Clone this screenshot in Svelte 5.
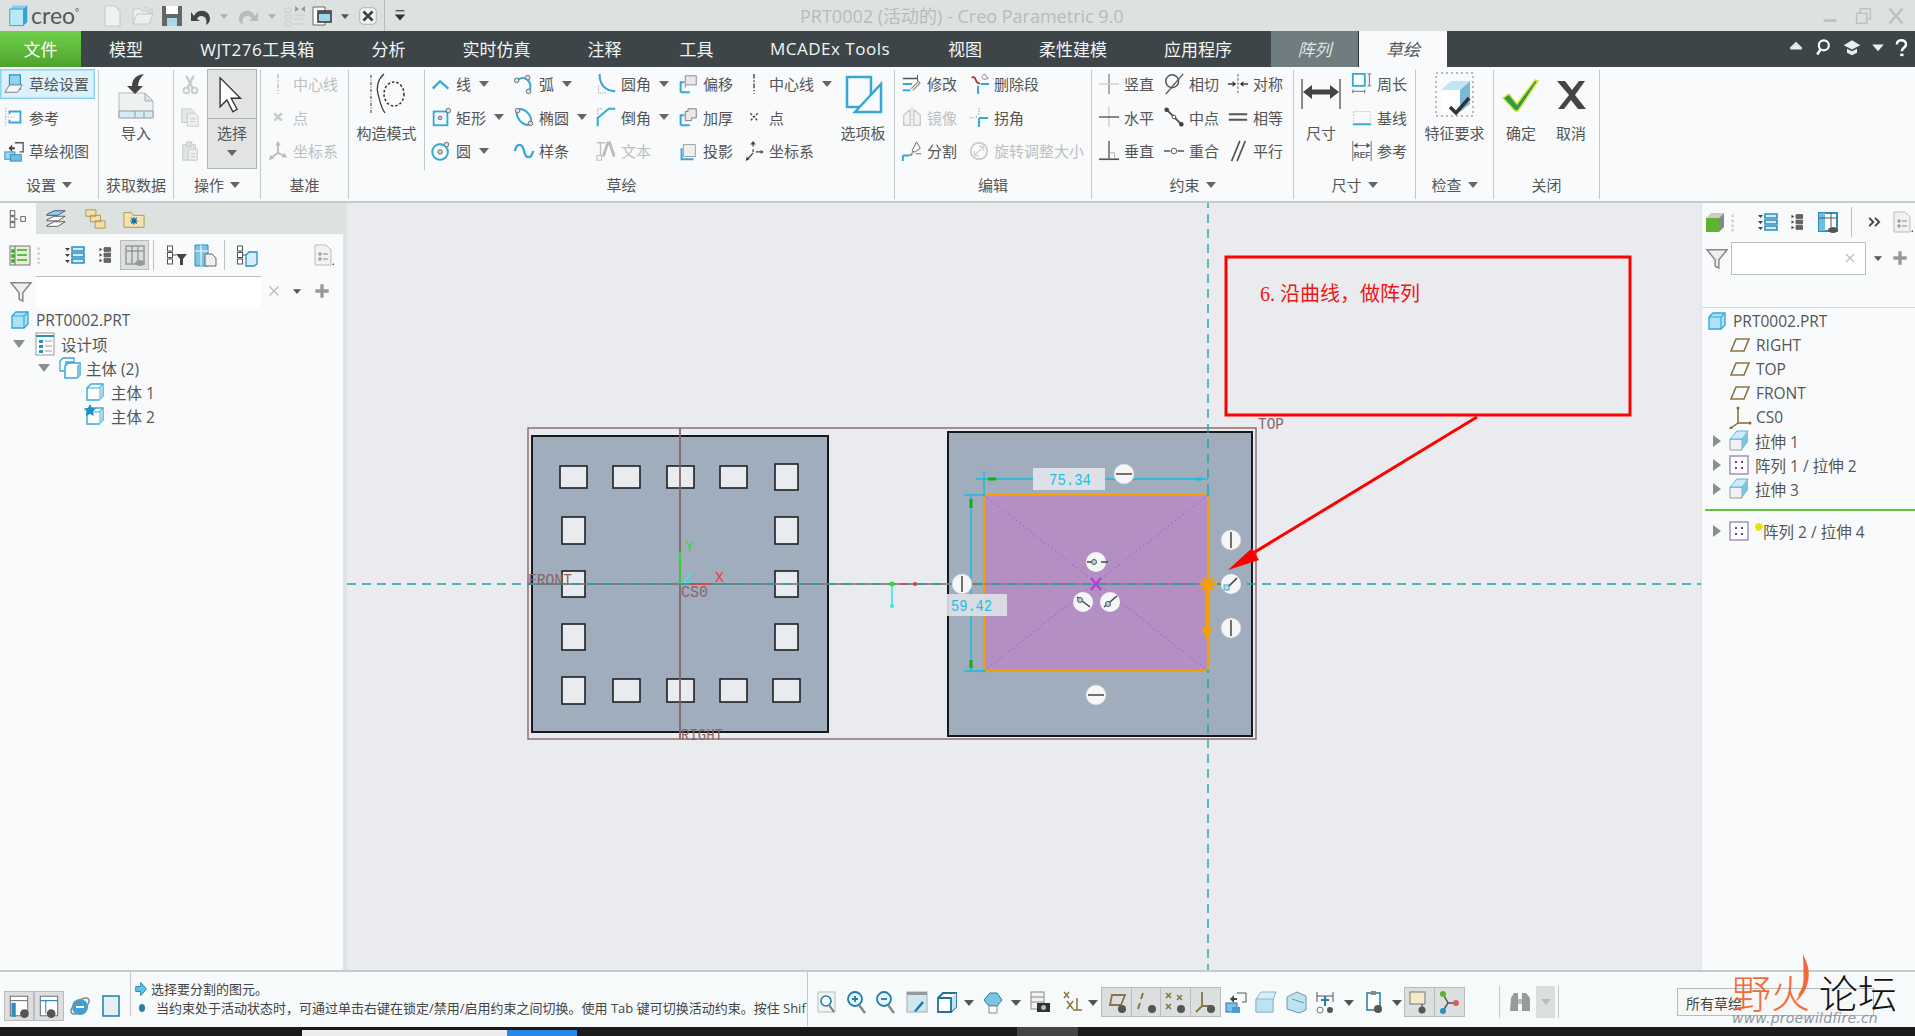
<script>
const B = '#35a8d8', G = '#555', L = '#c6caca', T = '#8a7440';
const box = `<path d="M4 8l4-4h12v12l-4 4H4z" fill="#aee3f7" stroke="${B}" stroke-width="1.4"/><path d="M4 8h12v12M16 8l4-4" fill="none" stroke="${B}" stroke-width="1.2"/>`;
const wbox = `<path d="M4 8l4-4h12v12l-4 4H4z" fill="#fff" stroke="${B}" stroke-width="1.4"/><path d="M16 8v12l4-4V4z" fill="#9fd8ee"/><path d="M4 8h12l4-4" fill="none" stroke="${B}" stroke-width="1"/>`;
const plane = `<path d="M3 18l5-12h13l-5 12z" fill="none" stroke="${T}" stroke-width="1.6"/>`;
const extr = `<path d="M3 10h12v11H3z" fill="#f2f2f2" stroke="#999"/><path d="M3 10l7-8h11l-6 8z" fill="#cfeaf6" stroke="${B}" stroke-width=".8"/><path d="M15 10l6-8v11l-6 8z" fill="#7cc4e2"/>`;
const patt = `<rect x="3" y="3" width="18" height="18" fill="#fff" stroke="#9a8ab8" stroke-width="1.4"/><path d="M8 8h2v2H8zM14 8h2v2h-2zM8 14h2v2H8zM14 14h2v2h-2z" fill="#6a3fa0"/>`;
const chain = (c) => `<path d="M6 7v10M6 12h6" stroke="#555" fill="none"/><rect x="3.5" y="3" width="5" height="5" fill="${c}" stroke="#555"/><rect x="3.5" y="9.5" width="5" height="5" fill="${c}" stroke="#555"/><rect x="3.5" y="16" width="5" height="5" fill="${c}" stroke="#555"/>`;
const listb = `<path d="M9 4h12v4H9zM9 10h12v4H9zM9 16h12v4H9z" fill="#cfeaf6" stroke="#2a8fbf" stroke-width="1.6"/><path d="M2 5h5l-2.500 3zM2 11h5l-2.500 3zM2 17h5l-2.500 3z" fill="#444"/>`;
const listg = `<path d="M11 4h7v4h-7zM11 10h7v4h-7zM11 16h7v4h-7z" fill="#666" stroke="#555"/><path d="M6 4l3 2-3 2zM6 10l3 2-3 2zM6 16l3 2-3 2z" fill="#444"/>`;
const sheet = `<path d="M4 2h11l5 5v15H4z" fill="#f0f2f2" stroke="#bbb"/><path d="M8 10h2v2H8zM8 15h2v2H8zM12 11h5M12 16h5" stroke="#888" fill="none"/><path d="M21 22h2v-2z" fill="#555"/>`;
const down = `<path d="M5 9h14l-7 8z" fill="#555"/>`;

const icons = {
 setup:`<path d="M7 2h12v16H7z" fill="#8fd4ef" stroke="#2a8fbf" stroke-width="1.2"/><path d="M2 21l5-8h14l-5 8z" fill="#f6f6f6" stroke="#777"/>`,
 ref:`<path d="M7 9V6h12v12H7v-3" fill="none" stroke="${B}" stroke-width="2"/><path d="M3 2v20M2 12h10" stroke="#aaa" stroke-dasharray="1.500 1.500" fill="none"/>`,
 view:`<path d="M13 3h9v10h-4" fill="none" stroke="#555" stroke-width="1.400"/><path d="M6 9l4-4v3h3v2h-3v3z" fill="#444"/><rect x="2" y="13" width="11" height="8" fill="#9fd8ee" stroke="#2a8fbf"/><rect x="8" y="16" width="12" height="7" fill="#6bbfe0" stroke="#2a8fbf"/>`,
 cut:`<circle cx="17" cy="19" r="3" fill="none" stroke="${L}" stroke-width="2"/><circle cx="8" cy="19" r="3" fill="none" stroke="${L}" stroke-width="2"/><path d="M8 3l7 14M16 3L9 17" stroke="${L}" stroke-width="2.500"/>`,
 copy:`<path d="M3 3h10l3 3v12H3z" fill="#e6e8e8" stroke="${L}"/><path d="M9 8h9l3 3v11H9z" fill="#eee" stroke="${L}"/><path d="M12 14h6M12 17h6" stroke="${L}"/>`,
 paste:`<path d="M4 5h14v17H4z" fill="#e2e4e4" stroke="${L}"/><path d="M8 2h6v5H8z" fill="#ddd" stroke="${L}"/><path d="M10 10h10v12H10z" fill="#eee" stroke="${L}"/><path d="M13 15h5M13 18h5" stroke="${L}"/>`,
 cline:`<path d="M12 1v22" stroke="#bbb" stroke-width="1.500" stroke-dasharray="5 2 1.500 2" fill="none"/>`,
 cline2:`<path d="M12 1v22" stroke="#444" stroke-width="1.500" stroke-dasharray="5 2 1.500 2" fill="none"/>`,
 xpt:`<path d="M8 8l8 8M16 8l-8 8" stroke="${L}" stroke-width="2.500"/>`,
 xpt2:`<path d="M8 8l8 8M16 8l-8 8" stroke="#444" stroke-width="1.500" stroke-dasharray="2.500 1.500"/>`,
 csys:`<path d="M12 3v11M12 14l8 4M12 14l-8 6" stroke="#bbb" stroke-width="2" fill="none"/><path d="M12 1l-3 5h6zM22 19l-6 0 3-5zM2 22l2-6 4 4z" fill="#bbb"/>`,
 csys2:`<path d="M11 4v3M11 10v3M11 14l-6 7M14 13h5" stroke="#444" stroke-width="1.400" fill="none"/><path d="M11 1l-3 4h6zM23 13l-4-2v4zM3 23l1-5 3 3z" fill="#444"/>`,
 line:`<path d="M3 17l8-8 9 8" fill="none" stroke="${B}" stroke-width="2.500"/>`,
 arc:`<path d="M4 8c8-6 18 0 14 12" fill="none" stroke="${B}" stroke-width="2.200"/><circle cx="4" cy="8" r="2.500" fill="#ddd" stroke="#666"/><circle cx="16" cy="5" r="2.500" fill="#ddd" stroke="#666"/><circle cx="17" cy="20" r="2.500" fill="#ddd" stroke="#666"/>`,
 fillet:`<path d="M5 1c0 12 6 18 17 19" fill="none" stroke="${B}" stroke-width="2.200"/><path d="M4 14v8h8" fill="none" stroke="#999" stroke-dasharray="1.500 1.500"/>`,
 offset:`<path d="M4 21V10h4M4 21h10" fill="none" stroke="${B}" stroke-width="2.200"/><path d="M9 16V3h12v10H9" fill="#e8e8e8" stroke="#888"/>`,
 rect:`<rect x="4" y="6" width="15" height="15" fill="none" stroke="${B}" stroke-width="2"/><circle cx="11" cy="13" r="2" fill="#ccc" stroke="#666"/><circle cx="20" cy="5" r="2.500" fill="#ddd" stroke="#666"/>`,
 ell:`<ellipse cx="12" cy="12" rx="6" ry="10" transform="rotate(-40 12 12)" fill="none" stroke="${B}" stroke-width="2.200"/><circle cx="5" cy="5" r="2.500" fill="#ddd" stroke="#666"/><circle cx="19" cy="19" r="2.500" fill="#ddd" stroke="#666"/>`,
 chamf:`<path d="M3 22v-9L15 3h7" fill="none" stroke="${B}" stroke-width="2.200"/><path d="M3 9V3h6" fill="none" stroke="#888" stroke-dasharray="1.500 1.500"/>`,
 thick:`<path d="M4 21V10h4M4 21h10" fill="none" stroke="${B}" stroke-width="2.200"/><path d="M9 16V6h3V3h9v10h-5v3z" fill="#e8e8e8" stroke="#777"/>`,
 circ:`<circle cx="11" cy="13" r="8.500" fill="none" stroke="${B}" stroke-width="2.200"/><circle cx="11" cy="13" r="2.500" fill="#ccc" stroke="#666"/><circle cx="18" cy="5" r="2.500" fill="#ddd" stroke="#666"/>`,
 spline:`<path d="M2 12c2-9 8-9 10 0s8 9 10 0" fill="none" stroke="${B}" stroke-width="2.500"/>`,
 txt:`<path d="M2 3h9M6 3v14" stroke="#c0c0c0" stroke-width="1.400"/><path d="M9 18l5-15h2l5 15" fill="none" stroke="#bbb" stroke-width="3"/><rect x="2" y="17" width="5" height="5" fill="none" stroke="#bbb"/>`,
 proj:`<path d="M5 9v12h13" fill="none" stroke="${B}" stroke-width="2.200"/><path d="M7 18V5h13v13z" fill="#f0f0f0" stroke="#999"/>`,
 modify:`<path d="M2 6h16M2 12h9M2 19h8" stroke="#555" stroke-width="1.500"/><path d="M2 12h10M2 19h8" stroke="${B}" stroke-width="2"/><path d="M18 2v7M13 19l8-8-2-2-8 8" fill="#f0e2c0" stroke="#555"/>`,
 delseg:`<path d="M4 5c6-3 3 8 9 6" fill="none" stroke="#a33" stroke-width="2"/><path d="M14 12h9M11 14v9" stroke="${B}" stroke-width="2.200"/><path d="M15 4l3-3 4 5-5 1z" fill="#fff" stroke="#777"/>`,
 mirror:`<path d="M12 1v22" stroke="#ccc" stroke-dasharray="2 2"/><path d="M10 4L3 10v11h7zM14 4l7 6v11h-7z" fill="#f2f2f2" stroke="${L}" stroke-width="1.500"/>`,
 corner:`<path d="M9 11v3M2 13h4" stroke="#888" stroke-dasharray="1.500 1.500"/><path d="M12 2v9" stroke="#888" stroke-dasharray="1.500 1.500"/><path d="M12 13h10M12 13v10" stroke="${B}" stroke-width="2.200" fill="none"/>`,
 split:`<path d="M2 17h7M2 17v6" stroke="${B}" stroke-width="2.200" fill="none"/><path d="M9 17l5-4M12 12l5-10 4 7-6 4zM16 15h6" stroke="#666" fill="#fff"/><circle cx="11" cy="16" r="1.500" fill="#999"/>`,
 rot:`<circle cx="12" cy="12" r="9" fill="none" stroke="#ccc" stroke-width="2"/><path d="M7 17L17 7M17 7h-5M17 7v5M7 17h5M7 17v-5" fill="none" stroke="#ccc" stroke-width="1.400"/>`,
 vert:`<path d="M12 1v22" stroke="#888" stroke-width="1.500"/><path d="M1 12h22" stroke="#ccc" stroke-width="1.500"/>`,
 horz:`<path d="M12 1v22" stroke="#ccc" stroke-width="1.500"/><path d="M1 12h22" stroke="#555" stroke-width="1.500"/>`,
 perp:`<path d="M12 1v19" stroke="#555" stroke-width="1.500"/><path d="M1 21h22" stroke="#555" stroke-width="1.800"/><path d="M12 14h6v6" fill="none" stroke="#aaa"/>`,
 tan:`<circle cx="10" cy="9" r="7" fill="none" stroke="#555" stroke-width="1.600"/><path d="M22 1L3 23" stroke="#555" stroke-width="1.500"/>`,
 mid:`<path d="M3 3l18 18" stroke="#555" stroke-width="2"/><circle cx="4" cy="4" r="2.500" fill="#444"/><circle cx="20" cy="20" r="2.500" fill="#444"/><circle cx="12" cy="12" r="2" fill="#fff" stroke="#444"/>`,
 coin:`<path d="M1 12h7M16 12h7" stroke="#555" stroke-width="1.400"/><circle cx="12" cy="12" r="3" fill="#fff" stroke="#555"/>`,
 sym:`<path d="M12 1v22" stroke="#888" stroke-dasharray="3 1.500" stroke-width="1.400"/><path d="M1 12h5M18 12h5" stroke="#444" stroke-width="1.400"/><path d="M10 12l-4-3v6zM14 12l4-3v6z" fill="#333"/>`,
 eq:`<path d="M2 9h20M2 15h20" stroke="#555" stroke-width="2.200"/>`,
 par:`<path d="M5 23L14 1M11 23L20 1" stroke="#555" stroke-width="1.800"/>`,
 peri:`<rect x="2" y="1" width="13" height="13" fill="#fff" stroke="${B}" stroke-width="2"/><path d="M20 1v13M18 1h4M18 14h4M2 20h13M2 18v4M15 18v4" stroke="#666"/>`,
 base:`<rect x="3" y="6" width="18" height="13" fill="none" stroke="#bbb" stroke-dasharray="1.500 1.500"/><path d="M2 20h20" stroke="${B}" stroke-width="2"/>`,
 refd:`<path d="M2 1v22M22 1v22M3 6h18" stroke="#666"/><path d="M3 6l4-3v6zM21 6l-4-3v6z" fill="#555"/><text x="12" y="20" font-size="9" text-anchor="middle" fill="#666" font-family="Liberation Sans" font-weight="700">REF</text>`,
 import:`<path d="M4 22h26l8 8v16H4z" fill="#eef1f1" stroke="#bbb"/><path d="M30 22l8 8h-8z" fill="#cfe7f1" stroke="#aaa"/><path d="M4 40h34v7H4zM20 40v7M29 40v7" fill="#d4ebf4" stroke="#999"/><path d="M29 3c-8 1-12 5-12 12h-5l8 8 8-8h-5c0-4 2-8 6-12z" fill="#444"/>`,
 cursor:`<path d="M6 4v34l8-8 7 14 5-3-7-13h11z" fill="#fff" stroke="#333" stroke-width="1.600"/>`,
 construct:`<path d="M4 2v38" stroke="#333" stroke-dasharray="3 1.500 1 1.500" fill="none"/><path d="M17 1c-6 5-8 13-6 20s3 14 7 19" fill="none" stroke="#333" stroke-width="1.200"/><ellipse cx="27" cy="21" rx="10" ry="12" fill="none" stroke="#333" stroke-dasharray="2.500 2" stroke-width="1.500"/>`,
 palette:`<path d="M4 3h24v30H4z" fill="none" stroke="${B}" stroke-width="2.500"/><path d="M12 38l26-28v28z" fill="#fafcfd" stroke="${B}" stroke-width="2.500"/>`,
 dim:`<path d="M2 2v30M40 2v30" stroke="#444" stroke-width="1.200"/><path d="M10 15h22" stroke="#444" stroke-width="5"/><path d="M3 15l9-7v14zM39 15l-9-7v14z" fill="#444"/>`,
 feat:`<rect x="1" y="1" width="37" height="43" fill="none" stroke="#bbb" stroke-width="2" stroke-dasharray="2 3"/><path d="M6 18l10-9h19v23l-10 8H6z" fill="#fff"/><path d="M6 18l10-9h19l-10 9z" fill="#bfe6f5"/><path d="M25 18l10-9v23l-10 8z" fill="#7ab9d6"/><path d="M15 35l6 6 13-15" fill="none" stroke="#333" stroke-width="3.500"/>`,
 ok:`<path d="M1 22l6-4 8 10L33 4l3 1-20 30h-3z" fill="#2e9a4c" stroke="#dbe33a" stroke-width="1.500"/>`,
 cancel:`<path d="M3 3h8l7 9 7-9h6L21 17l11 14h-8l-7-9-7 9H4l11-14z" fill="#454545"/>`,
 logo:`<path d="M3 5l4-4h15v18l-4 4H3z" fill="#7fd0f0"/><path d="M3 5h15v18H3z" fill="#b9e8fa" stroke="#3aa0cc"/><path d="M18 5l4-4v18l-4 4z" fill="#3aa0cc"/>`,
 new:`<path d="M5 2h10l5 5v15H5z" fill="#f0f2f2" stroke="#c8cccc" stroke-width="1.200"/>`,
 open:`<path d="M3 20V5h7l2 2h7v3" fill="#eee" stroke="#c4c8c8"/><path d="M3 20l4-10h16l-4 10z" fill="#eee" stroke="#c4c8c8"/><path d="M14 4c3-1 5 0 6 2l2-2v5h-5" fill="none" stroke="#ccc"/>`,
 save:`<path d="M2 2h20v20H2z" fill="#666"/><path d="M6 2h12v8H6z" fill="#fff"/><path d="M7 14h10v8H7z" fill="#a6d8ec"/>`,
 undo:`<path d="M5 12c3-8 16-7 16 3 0 3-2 5-4 6 1-3 1-9-5-9-2 0-3 1-4 3l3 2H2V8z" fill="#444"/>`,
 redo:`<path d="M19 12C16 4 3 5 3 15c0 3 2 5 4 6-1-3-1-9 5-9 2 0 3 1 4 3l-3 2h9V8z" fill="#bbb"/>`,
 regen:`<path d="M2 4h6v4H2zM2 11h6v4H2zM2 18h6v4H2z" fill="none" stroke="#ccc"/><path d="M10 11h12M10 15h12M10 20h12" stroke="#ccc"/><path d="M12 2l4 3-4 3zM22 2l-4 3 4 3z" fill="#999"/>`,
 win:`<path d="M3 3h12v18H3z" fill="#fff" stroke="#666"/><path d="M8 7h13v11H8z" fill="#9fd8ee" stroke="#333" stroke-width="1.500"/><path d="M8 7h13v3H8z" fill="#555"/>`,
 closew:`<rect x="3" y="3" width="18" height="18" rx="4" fill="#f4f4f4" stroke="#aaa"/><path d="M7 7l10 10M17 7L7 17" stroke="#444" stroke-width="3"/>`,
 more:`<path d="M6 5h12" stroke="#333" stroke-width="1.500"/><path d="M5 10h14l-7 8z" fill="#333"/>`,
 min:`<path d="M5 17h14" stroke="#bcc2c2" stroke-width="3"/>`,
 rest:`<path d="M5 9h11v11H5zM9 9V4h11v11h-4" fill="none" stroke="#bcc2c2" stroke-width="1.600"/>`,
 x:`<path d="M5 4l14 16M19 4L5 20" stroke="#bcc2c2" stroke-width="3"/>`,
 up:`<path d="M5 15l7-7 7 7z" fill="#e8eded"/><path d="M5 14l7-7 7 7" stroke="#e8eded" stroke-width="2" fill="none"/>`,
 find:`<circle cx="13" cy="10" r="6" fill="none" stroke="#fff" stroke-width="2.500"/><path d="M9 15l-4 6" stroke="#fff" stroke-width="3"/>`,
 hat:`<path d="M12 4l10 6-10 5L2 10z" fill="#e8eded"/><path d="M6 14v5l6 3 6-3v-5l-6 3z" fill="#e8eded"/>`,
 dn:`<path d="M5 9h14l-7 8z" fill="#e8eded"/>`,
 ph:`<path d="M7 9c0-7 11-7 11 0 0 4-5 4-5 8" fill="none" stroke="#fff" stroke-width="3"/><path d="M11 20h4v3h-4z" fill="#fff"/>`,
 tree:chain('#fff')+`<rect x="15" y="9.500" width="5" height="5" fill="#fff" stroke="#555"/>`,
 layer:`<path d="M2 7l8-4h12l-8 5H2z" fill="#8fd4ef" stroke="#447"/><path d="M2 13l8-4h12l-8 5H2zM2 19l8-4h12l-8 5H2z" fill="#fff" stroke="#555"/>`,
 folders:`<path d="M2 2h11v7H2zM7 8h11v7H7zM12 14h11v8H12z" fill="#f4dfa7" stroke="#a89454"/>`,
 work:`<path d="M1 5h8l2 3h12v13H1z" fill="#f4e3ae" stroke="#a89454"/><path d="M12 10v8M8 14h8M9 11l6 6M15 11l-6 6" stroke="#1c6f9e" stroke-width="1.500"/>`,
 tgreen:`<rect x="2" y="3" width="20" height="19" fill="#e4f1d8" stroke="#777"/><path d="M7 3v19" stroke="#777"/><path d="M4 7h2v2H4zM4 12h2v2H4zM4 17h2v2H4zM9 7h10M9 12h10M9 17h10" stroke="#3da82a" fill="#3da82a" stroke-width="1.400"/>`,
 dots:`<path d="M10 3h3v3h-3zM10 9h3v3h-3zM10 15h3v3h-3zM10 20h3v3h-3z" fill="#d0d3d3"/>`,
 listb, listg, sheet,
 cols:`<path d="M3 3h18v18H3zM9 3v18M15 3v18M3 8h18" fill="none" stroke="#999" stroke-width="1.500"/><ellipse cx="17" cy="20" rx="5" ry="3" fill="#999"/>`,
 colsb:`<path d="M3 3h18v18H3z" fill="#fff" stroke="#2a8fbf" stroke-width="2"/><path d="M3 3h6v18H3z" fill="#6bbfe0"/><path d="M15 3v14M3 8h18" stroke="#555"/><ellipse cx="17" cy="20" rx="5" ry="3" fill="#555"/>`,
 tfilter:chain('#fff')+`<path d="M12 11h11l-4 5v6h-3v-6z" fill="#444"/>`,
 tsheet:`<path d="M2 2h13v21H2z" fill="#7cc4e2" stroke="#2a8fbf"/><path d="M8 2v21M2 8h13" stroke="#fff"/><path d="M12 11h7l4 4v8H12z" fill="#eee" stroke="#666"/>`,
 tbody:chain('#fff')+`<path d="M12 12l3-3h8v12l-3 2h-8z" fill="#d4eefa" stroke="#2a8fbf" stroke-width="1.300"/>`,
 filter:`<path d="M1 3h22l-9 11v9l-4-2v-7z" fill="#eee" stroke="#888" stroke-width="1.600"/>`,
 xg:`<path d="M6 6l12 12M18 6L6 18" stroke="#bbb" stroke-width="1.800"/>`,
 down,
 plus:`<path d="M12 4v16M4 12h16" stroke="#999" stroke-width="4"/>`,
 box, wbox, plane, extr, patt,
 boxes:`<path d="M2 5l3-3h11v4H8v9H2z" fill="#fff" stroke="${B}" stroke-width="1.300"/><path d="M7 10l3-3h12v12l-3 3H7z" fill="#fff" stroke="${B}" stroke-width="1.500"/><path d="M19 10v12l3-3V7z" fill="#7cc4e2"/>`,
 items:`<rect x="3" y="1" width="18" height="22" fill="#fff" stroke="#999"/><path d="M3 4h18" stroke="#2a8fbf" stroke-width="2"/><path d="M6 8h4v3H6zM6 13h4v3H6zM6 18h4v3H6z" fill="#2a8fbf"/><path d="M12 9h7M12 14h7M12 19h7" stroke="#999"/>`,
 sbox:wbox+`<path d="M7 0l2 4 4 .5-3 3 .8 4.500L7 10l-4 2 .8-4.500-3-3L5 4z" fill="#1f8fc4"/>`,
 cube3:`<path d="M3 8h13v14H3z" fill="#5cb531"/><path d="M3 8l5-5h13l-5 5z" fill="#ccc"/><path d="M16 8l5-5v14l-5 5z" fill="#888"/>`,
 csysb:`<path d="M10 3v15M10 18h12M10 18l-7 5" stroke="#8a6a30" stroke-width="1.500" fill="none"/><circle cx="10" cy="3" r="1.500" fill="#8a6a30"/><circle cx="22" cy="18" r="1.500" fill="#8a6a30"/><circle cx="3" cy="23" r="1.500" fill="#8a6a30"/>`,
 chev:`<path d="M5 7l5 5-5 5M12 7l5 5-5 5" fill="none" stroke="#444" stroke-width="2.200"/>`,
 star:`<path d="M4 0v8M0 4h8M1 1l6 6M7 1L1 7" stroke="#e4e400" stroke-width="1.800"/>`,
 sb1:`<rect x="4" y="3" width="16" height="18" fill="#fff" stroke="#777"/><path d="M4 7h16" stroke="#777"/><rect x="5" y="9" width="4" height="13" fill="#2a8fbf"/><circle cx="17" cy="19" r="4" fill="#555"/>`,
 sb2:`<rect x="4" y="3" width="16" height="18" fill="#fff" stroke="#777"/><path d="M4 7h16M9 7v12" stroke="#2a8fbf"/><circle cx="14" cy="19" r="4" fill="#555"/>`,
 ie:`<circle cx="12" cy="13" r="8" fill="#3aa0dc"/><ellipse cx="12" cy="12" rx="11" ry="5" transform="rotate(-40 12 12)" fill="none" stroke="#7f8c94" stroke-width="1.500"/><path d="M8 13h8" stroke="#fff" stroke-width="2"/>`,
 winb:`<rect x="4" y="2" width="16" height="20" fill="#e4f0f5" stroke="#1f7da6" stroke-width="1.500"/>`,
 arrowb:`<path d="M2 7h6V2l7 8-7 8v-5H2z" fill="#5cc0e8" stroke="#1f7da6"/>`,
 zm:`<rect x="3" y="2" width="17" height="20" fill="#f2f4f4" stroke="#bbb"/><circle cx="11" cy="11" r="5" fill="#fff" stroke="#1f7da6" stroke-width="1.600"/><path d="M14 15l5 7" stroke="#777" stroke-width="2"/>`,
 zp:`<circle cx="10" cy="9" r="7" fill="#e8f6fc" stroke="#1f7da6" stroke-width="1.800"/><path d="M10 6v6M7 9h6" stroke="#1f7da6" stroke-width="1.800"/><path d="M14 15l6 8" stroke="#888" stroke-width="2.500"/>`,
 zn:`<circle cx="10" cy="9" r="7" fill="#e8f6fc" stroke="#1f7da6" stroke-width="1.800"/><path d="M7 9h6" stroke="#1f7da6" stroke-width="1.800"/><path d="M14 15l6 8" stroke="#888" stroke-width="2.500"/>`,
 repaint:`<rect x="2" y="2" width="20" height="20" fill="#cfe7f1" stroke="#aaa"/><path d="M2 2h20v3H2z" fill="#999"/><path d="M9 21l8-10 2 2-8 9z" fill="#1f7da6"/>`,
 vbox:`<path d="M3 8l5-5h13v14l-5 5H3z" fill="#fff" stroke="#1f6f96" stroke-width="1.800"/><path d="M16 8l5-5v14l-5 5z" fill="#bfe3f2"/><path d="M3 8h13v14" fill="none" stroke="#1f6f96" stroke-width="1.800"/>`,
 disp:`<path d="M3 10l6-7h7l5 7-5 6H8z" fill="#7cc4e2" stroke="#1f7da6"/><path d="M8 16h8v7H8z" fill="#fff" stroke="#888"/>`,
 cam:`<rect x="3" y="2" width="13" height="17" fill="#f2f2f2" stroke="#888"/><path d="M3 7h13M3 12h13" stroke="#888"/><rect x="9" y="13" width="13" height="9" fill="#333"/><circle cx="15.500" cy="17.500" r="2.500" fill="#bbb"/>`,
 dtm:`<path d="M5 2l5 6M10 2L5 8M8 11l6 8M14 11l-6 8M18 8v12M14 20h9" stroke="${T}" stroke-width="1.500"/>`,
 t1:`<path d="M6 15l2-10h13l-4 10z" fill="none" stroke="${T}" stroke-width="1.800"/><circle cx="18" cy="19" r="4" fill="#555"/>`,
 t2:`<path d="M9 3L7 9M6 13l-2 6" stroke="${T}" stroke-width="2"/><circle cx="18" cy="19" r="4" fill="#555"/>`,
 t3:`<path d="M3 3l5 5M8 3L3 8M14 5l5 5M19 5l-5 5M3 14l5 5M8 14l-5 5" stroke="${T}" stroke-width="1.600"/><circle cx="18" cy="19" r="4" fill="#555"/>`,
 t4:`<path d="M9 2v14M9 16h10M9 16l-6 6" stroke="${T}" stroke-width="1.800"/><circle cx="18" cy="19" r="4" fill="#555"/>`,
 shade1:`<path d="M13 3h9v9h-4" fill="none" stroke="#555"/><path d="M6 9l4-4v3h3v2h-3v3z" fill="#444"/><rect x="2" y="13" width="11" height="9" fill="#7cc4e2" stroke="#1f7da6"/><rect x="8" y="17" width="8" height="6" fill="#4aa0cc"/>`,
 shade2:`<path d="M2 9l5-7h15l-3 8v12H2z" fill="#d8eef7" stroke="#8fb8c8"/><path d="M2 9h17v13H2z" fill="#bde2f1" stroke="#8fb8c8"/>`,
 shade3:`<path d="M3 7l10-5 9 4v14l-7 3-12-4z" fill="#bde2f1" stroke="#6a98aa"/><path d="M8 9l12 4" stroke="#6a98aa"/>`,
 sec:`<path d="M4 2v10M20 2v10M4 6h16" stroke="#555"/><path d="M12 6v10M8 10h8" stroke="#1f7da6" stroke-width="2"/><circle cx="7" cy="20" r="3" fill="none" stroke="#777"/><circle cx="17" cy="20" r="3" fill="#555"/>`,
 pg:`<rect x="5" y="3" width="13" height="17" fill="#fff" stroke="#1f7da6" stroke-width="1.500"/><rect x="9" y="1" width="5" height="4" fill="#888"/><circle cx="16" cy="19" r="4" fill="#555"/>`,
 b1:`<rect x="3" y="2" width="15" height="12" fill="#f4e9c8" stroke="#777"/><path d="M15 14v6" stroke="#333"/><circle cx="15" cy="20" r="3.500" fill="#555"/>`,
 b2:`<path d="M6 4l5 9-5 8M11 13h8" stroke="#555" stroke-width="1.500" fill="none"/><circle cx="6" cy="4" r="3" fill="#5cb531"/><circle cx="6" cy="21" r="3" fill="#2a8fbf"/><circle cx="19" cy="13" r="3" fill="#d76060"/>`,
 bino:`<path d="M3 8l3-5h4v18H2zM14 3h4l4 5 0 13h-8z" fill="#999"/><path d="M10 9h4v5h-4z" fill="#bbb"/>`,
 dn2:`<path d="M7 10h10l-5 6z" fill="#555"/>`,
};

const it = (i, t, o = {}) => ({ i, t, ...o });
const groups = [
 { w: 99, label: '设置', arr: 1, parts: [{ k: 'col', w: 98, items: [it('setup','草绘设置',{hl:1}), it('ref','参考'), it('view','草绘视图')] }] },
 { w: 75, label: '获取数据', parts: [{ k: 'lg', w: 74, i: 'import', iw: 42, ih: 48, t: '导入' }] },
 { w: 87, label: '操作', arr: 1, parts: [{ k: 'ico', w: 33, items: ['cut','copy','paste'] }, { k: 'sel' }] },
 { w: 88, label: '基准', parts: [{ k: 'col', w: 84, pl: 3, items: [it('cline','中心线',{dis:1}), it('xpt','点',{dis:1}), it('csys','坐标系',{dis:1})] }] },
 { w: 546, label: '草绘', parts: [
   { k: 'lg', w: 75, i: 'construct', iw: 40, ih: 44, t: '构造模式' }, { k: 'vsep' },
   { k: 'col', w: 83, pl: 2, items: [it('line','线',{a:1}), it('rect','矩形',{a:1}), it('circ','圆',{a:1})] },
   { k: 'col', w: 82, items: [it('arc','弧',{a:1}), it('ell','椭圆',{a:1}), it('spline','样条')] },
   { k: 'col', w: 82, items: [it('fillet','圆角',{a:1}), it('chamf','倒角',{a:1}), it('txt','文本',{dis:1})] },
   { k: 'col', w: 64, items: [it('offset','偏移'), it('thick','加厚'), it('proj','投影')] },
   { k: 'col', w: 95, pl: 2, items: [it('cline2','中心线',{a:1}), it('xpt2','点'), it('csys2','坐标系')] },
   { k: 'lg', w: 56, i: 'palette', iw: 40, ih: 42, t: '选项板' } ] },
 { w: 197, label: '编辑', parts: [
   { k: 'col', w: 67, pl: 3, items: [it('modify','修改'), it('mirror','镜像',{dis:1}), it('split','分割')] },
   { k: 'col', w: 126, items: [it('delseg','删除段'), it('corner','拐角'), it('rot','旋转调整大小',{dis:1})] } ] },
 { w: 202, label: '约束', arr: 1, parts: [
   { k: 'col', w: 65, pl: 3, items: [it('vert','竖直'), it('horz','水平'), it('perp','垂直')] },
   { k: 'col', w: 64, items: [it('tan','相切'), it('mid','中点'), it('coin','重合')] },
   { k: 'col', w: 70, items: [it('sym','对称'), it('eq','相等'), it('par','平行')] } ] },
 { w: 122, label: '尺寸', arr: 1, parts: [
   { k: 'lg', w: 54, i: 'dim', iw: 42, ih: 36, t: '尺寸' },
   { k: 'col', w: 66, items: [it('peri','周长'), it('base','基线'), it('refd','参考')] } ] },
 { w: 78, label: '检查', arr: 1, parts: [{ k: 'lg', w: 77, i: 'feat', iw: 40, ih: 46, t: '特征要求' }] },
 { w: 106, label: '关闭', parts: [
   { k: 'lg', w: 54, i: 'ok', iw: 38, ih: 38, t: '确定' }, { k: 'lg', w: 46, i: 'cancel', iw: 34, ih: 34, t: '取消' } ] },
];

const tabs = [['文件',81,0],['模型',90,0],['WJT276工具箱',173,.5],['分析',89,0],['实时仿真',127,0],['注释',89,0],['工具',95,0],['MCADEx Tools',172,.5],['视图',98,0],['柔性建模',118,0],['应用程序',132,0]];

const quick = [['new',31,24],['open',29,24],['save',31,24],['undo',28,24],['down',18,14,1],['redo',30,24],['down',18,14,1],['regen',27,24],['win',28,24],['down',18,14],['closew',28,22]];
const leftTabs = ['layer','folders','work'];
const leftTools = [['tgreen',26,24],['dots',12,20],['_',15],['listb',30,24],['listg',30,22],['cols',29,24,1],['|',9],['tfilter',36,24],['tsheet',22,24],['|',16],['tbody',28,24],['_',50],['sheet',26,24]];
const rightTools = [['cube3',26,24],['dots',10,20],['_',9],['listb',42,24],['listg',16,22],['colsb',46,24],['|',1],['_',9],['chev',28,20],['sheet',26,24]];

const leftTree = [
 { pl:10, i:'box', t:'PRT0002.PRT' },
 { pl:13, tri:'d', i:'items', t:'设计项' },
 { pl:38, tri:'d', i:'boxes', t:'主体 (2)' },
 { pl:85, i:'wbox', t:'主体 1' },
 { pl:85, i:'sbox', t:'主体 2' },
];
const rightTree = [
 { pl:5, i:'box', t:'PRT0002.PRT' },
 { pl:28, i:'plane', t:'RIGHT' },
 { pl:28, i:'plane', t:'TOP' },
 { pl:28, i:'plane', t:'FRONT' },
 { pl:28, i:'csysb', t:'CS0' },
 { pl:9, tri:'r', i:'extr', t:'拉伸 1' },
 { pl:9, tri:'r', i:'patt', t:'阵列 1 / 拉伸 2' },
 { pl:9, tri:'r', i:'extr', t:'拉伸 3' },
];

const statusL = [['sb1',30,26,1],['sb2',30,26,1],['ie',32,24],['winb',30,24]];
const tb1 = [['zm',30],['zp',29],['zn',30],['repaint',31],['vbox',30],['dn2',14],['disp',33],['dn2',14],['cam',34],['dtm',28],['dn2',16]];
const tb2 = [['t1'],['t2'],['t3'],['t4']];
const tb3 = [['shade1',29],['shade2',31],['shade3',30],['sec',28],['dn2',20],['pg',30],['dn2',15]];
const tb4 = [['b1'],['b2']];

const holes = [
 [560,467,27,22],[613,467,27,22],[667,467,27,22],[720,467,27,22],[775,465,23,26],
 [562,518,23,27],[775,518,23,27],[562,572,23,26],[775,572,23,26],[562,625,23,26],[775,625,23,26],
 [562,678,23,27],[613,680,27,23],[667,680,27,23],[720,680,27,23],[773,680,27,23],
];
const knobs = [
 [1124,475,'h'],[1231,541,'v'],[1231,629,'v'],[1096,696,'h'],[962,585,'v'],
];
</script>

<div class="app">
  <header class="title">
    <svg class="logo" viewBox="0 0 24 24">{@html icons.logo}</svg>
    <span class="brand">creo<sup>°</sup></span>
    <div class="quick">
      {#each quick as q}
        <span class="qi" style={`width:${q[1]}px`}><svg style={`width:${q[2]}px;height:${q[2]}px;opacity:${q[3] ? .35 : 1}`} viewBox="0 0 24 24">{@html icons[q[0]]}</svg></span>
      {/each}
      <span class="qsep"></span>
      <span class="qi more"><svg viewBox="0 0 24 24">{@html icons.more}</svg></span>
    </div>
    <div class="wintitle">PRT0002 (活动的) - Creo Parametric 9.0</div>
    <div class="winbtns">
      {#each ['min','rest','x'] as w}<svg viewBox="0 0 24 24">{@html icons[w]}</svg>{/each}
    </div>
  </header>

  <nav class="tabs">
    {#each tabs as t, n}
      <span class="tab" class:file={n === 0} style={`width:${t[1]}px;letter-spacing:${t[2]}px`}>{t[0]}</span>
    {/each}
    <span class="tab ctx">阵列</span>
    <span class="tab active">草绘</span>
    <div class="helpers">
      {#each [['up',27],['find',28],['hat',30],['dn',22],['ph',24]] as h}
        <span class="hb" style={`width:${h[1]}px`}><svg viewBox="0 0 24 24">{@html icons[h[0]]}</svg></span>
      {/each}
    </div>
  </nav>

  <section class="ribbon">
    {#each groups as g}
      <div class="group" style={`width:${g.w}px`}>
        <div class="gbody">
          {#each g.parts as p}
            {#if p.k === 'col'}
              <div class="col" style={`width:${p.w}px;margin-left:${p.pl || 0}px`}>
                {#each p.items as c}
                  <div class="item" class:hl={c.hl} class:dis={c.dis}>
                    <svg class="ic" viewBox="0 0 24 24">{@html icons[c.i]}</svg>
                    <span>{c.t}</span>
                    {#if c.a}<i class="caret"></i>{/if}
                  </div>
                {/each}
              </div>
            {:else if p.k === 'ico'}
              <div class="col" style={`width:${p.w}px`}>
                {#each p.items as c}
                  <div class="item only"><svg class="ic" viewBox="0 0 24 24">{@html icons[c]}</svg></div>
                {/each}
              </div>
            {:else if p.k === 'sel'}
              <div class="select">
                <div class="seltop"><svg viewBox="0 0 40 46">{@html icons.cursor}</svg></div>
                <div class="selbot"><span>选择</span><i class="caret"></i></div>
              </div>
            {:else if p.k === 'vsep'}
              <div class="vsep"></div>
            {:else}
              <div class="large" style={`width:${p.w}px`}>
                <div class="lgicon">
                  <svg style={`width:${p.iw}px;height:${p.ih}px`} viewBox={`0 0 ${p.iw} ${p.ih}`}>{@html icons[p.i]}</svg>
                </div>
                <span>{p.t}</span>
              </div>
            {/if}
          {/each}
        </div>
        <div class="glabel">{g.label}{#if g.arr}<i class="caret"></i>{/if}</div>
      </div>
    {/each}
  </section>

  <main class="main">
    <aside class="left">
      <div class="ptabs">
        <span class="ptab on"><svg viewBox="0 0 24 24">{@html icons.tree}</svg></span>
        {#each leftTabs as t}<span class="ptab"><svg viewBox="0 0 24 24">{@html icons[t]}</svg></span>{/each}
      </div>
      <div class="ptools">
        {#each leftTools as q}
          {#if q[0] === '_'}
            <span class="gap" style={`width:${q[1]}px`}></span>
          {:else if q[0] === '|'}
            <span class="tsep" style={`width:${q[1]}px`}></span>
          {:else}
            <span class="pt" class:pressed={q[3]} style={`width:${q[1]}px`}><svg style={`width:${q[2]}px;height:${q[2]}px`} viewBox="0 0 24 24">{@html icons[q[0]]}</svg></span>
          {/if}
        {/each}
      </div>
      <div class="filter">
        <svg class="fi" viewBox="0 0 24 24">{@html icons.filter}</svg>
        <div class="search"></div>
        <svg class="fx" viewBox="0 0 24 24">{@html icons.xg}</svg>
        <svg class="fd" viewBox="0 0 24 24">{@html icons.down}</svg>
        <svg class="fp" viewBox="0 0 24 24">{@html icons.plus}</svg>
      </div>
      <div class="tree">
        {#each leftTree as r}
          <div class="row" style={`padding-left:${r.pl}px`}>
            {#if r.tri}<i class="tri d"></i>{/if}
            <svg viewBox="0 0 24 24">{@html icons[r.i]}</svg><span>{r.t}</span>
          </div>
        {/each}
      </div>
    </aside>

    <div class="canvas">
      <svg class="draw" viewBox="347 204 1354 767">
        <rect x="532" y="437" width="296" height="296" fill="#a0adbc" stroke="#151a1e" stroke-width="2"/>
        <rect x="948" y="433" width="304" height="304" fill="#a0adbc" stroke="#151a1e" stroke-width="2"/>
        {#each holes as h}
          <rect x={h[0]} y={h[1]} width={h[2]} height={h[3]} fill="#e9ebef" stroke="#1c2126" stroke-width="1.600"/>
        {/each}

        <rect x="528" y="429" width="728" height="311" fill="none" stroke="#8a6468" stroke-width="1.400"/>
        <path d="M680 429V740" stroke="#86646a" stroke-width="1.800"/>
        <path d="M528 585H1231" stroke="#8a6468" stroke-width="1.400"/>
        <path d="M347 585H1701" stroke="#16a6a8" stroke-width="1.400" stroke-dasharray="9 6"/>
        <path d="M1208 200V972" stroke="#16a6a8" stroke-width="1.400" stroke-dasharray="9 6"/>

        <path d="M680 553V585" stroke="#2fdc2f" stroke-width="1.600"/>
        <path d="M680 553l-2 10h4z" fill="#2fdc2f"/>
        <path d="M690 585H711" stroke="#f03a3a" stroke-width="1.600"/>
        <text class="ax" x="685" y="552" fill="#35d835" textLength="9" lengthAdjust="spacingAndGlyphs">Y</text>
        <text class="ax" x="684" y="584" fill="#2fe6f0" textLength="9" lengthAdjust="spacingAndGlyphs">Z</text>
        <text class="ax" x="715" y="583" fill="#f03a3a" textLength="9" lengthAdjust="spacingAndGlyphs">X</text>
        <text class="dl" x="528" y="586" textLength="44" lengthAdjust="spacingAndGlyphs">FRONT</text>
        <text class="dl" x="681" y="598" textLength="27" lengthAdjust="spacingAndGlyphs">CS0</text>
        <text class="dl" x="681" y="741" textLength="42" lengthAdjust="spacingAndGlyphs">RIGHT</text>
        <text class="dl" x="1258" y="430" textLength="26" lengthAdjust="spacingAndGlyphs">TOP</text>

        <path d="M892 585V607" stroke="#36e8f0" stroke-width="1.600"/>
        <circle cx="892" cy="585" r="2.500" fill="#2fdc2f"/>
        <circle cx="892" cy="607" r="2" fill="#36e8f0"/>
        <path d="M900 585h8" stroke="#f03a3a" stroke-width="1.400"/>
        <circle cx="915" cy="585" r="2" fill="#f03a3a"/>

        <rect x="984" y="496" width="224" height="176" fill="#b48fc4"/>
        <path d="M984 496L1208 672M1208 496L984 672" stroke="#b35fd6" stroke-width="1.200" stroke-dasharray="1.500 3"/>
        <path d="M947 585H1208" stroke="#8a6468" stroke-width="1.200"/>
        <path d="M947 585H1208" stroke="#16a6a8" stroke-width="1.400" stroke-dasharray="9 6"/>
        <rect x="984" y="496" width="224" height="176" fill="none" stroke="#f5a000" stroke-width="2"/>

        <path d="M984 472V496M976 480H1033M1105 480H1208" stroke="#13bde0" stroke-width="1.400" fill="none"/>
        <path d="M964 496H984M964 672H984M971 497V595M971 617V672" stroke="#13bde0" stroke-width="1.400" fill="none"/>
        <path d="M988 480h8" stroke="#12b012" stroke-width="3"/>
        <path d="M1196 480h6" stroke="#13bde0" stroke-width="3"/>
        <path d="M971 500v9M971 661v8" stroke="#12b012" stroke-width="3"/>
        <rect x="1033" y="469" width="72" height="22" fill="#dde0e6"/>
        <text class="dim" x="1049" y="486" textLength="42" lengthAdjust="spacingAndGlyphs">75.34</text>
        <rect x="947" y="595" width="60" height="22" fill="#dde0e6" opacity=".92"/>
        <text class="dim" x="951" y="612" textLength="41" lengthAdjust="spacingAndGlyphs">59.42</text>

        <path d="M1091 579l10 12M1101 579l-10 12" stroke="#b63fd8" stroke-width="2.400"/>
        <path d="M1203 579l10 12M1213 579l-10 12M1200 585h17" stroke="#f5a000" stroke-width="3"/>
        <path d="M1207 585V631" stroke="#f5a000" stroke-width="3"/>
        <path d="M1202 629h10l-5 13z" fill="#f5a000"/>
        <circle cx="1208" cy="496" r="1.500" fill="#13bde0"/><circle cx="1208" cy="672" r="1.500" fill="#13bde0"/><circle cx="984" cy="496" r="1.500" fill="#13bde0"/><circle cx="984" cy="672" r="1.500" fill="#13bde0"/>

        {#each knobs as k}
          <circle cx={k[0]} cy={k[1]} r="10" fill="#f6f6f6" stroke="#c8cdd3" stroke-width=".8"/>
          {#if k[2] === 'h'}<path d={`M${k[0]-8} ${k[1]}h16`} stroke="#444" stroke-width="1.500"/>
          {:else}<path d={`M${k[0]} ${k[1]-8}v16`} stroke="#444" stroke-width="1.500"/>{/if}
        {/each}
        <circle cx="1096" cy="563" r="10" fill="#f6f6f6"/><path d="M1087 563h5M1101 563h7" stroke="#444" stroke-width="1.500"/><circle cx="1094" cy="563" r="2.500" fill="#9fd8ee" stroke="#555"/>
        <circle cx="1083" cy="603" r="10" fill="#f6f6f6"/><path d="M1077 598l13 10" stroke="#444" stroke-width="1.500"/><circle cx="1080" cy="601" r="2.500" fill="#9fd8ee" stroke="#555"/>
        <circle cx="1110" cy="603" r="10" fill="#f6f6f6"/><path d="M1104 608l13-11" stroke="#444" stroke-width="1.500"/><circle cx="1108" cy="605" r="2.500" fill="#9fd8ee" stroke="#555"/>
        <circle cx="1231" cy="585" r="10" fill="#f6f6f6"/><path d="M1228 588l9-9" stroke="#444" stroke-width="1.700"/><rect x="1224" y="586" width="5" height="5" fill="#aee3f7" stroke="#2a8fbf" stroke-width=".8"/>

        <rect x="1226" y="258" width="404" height="158" fill="none" stroke="#f00" stroke-width="3"/>
        <text class="note" x="1260" y="302">6. 沿曲线，做阵列</text>
        <path d="M1477 418L1250 556" stroke="#f00" stroke-width="3"/>
        <path d="M1228 571L1252 549L1259 561z" fill="#f00"/>
      </svg>
    </div>

    <aside class="right">
      <div class="rtools">
        {#each rightTools as q}
          {#if q[0] === '_'}
            <span class="gap" style={`width:${q[1]}px`}></span>
          {:else if q[0] === '|'}
            <span class="tsep" style={`width:${q[1]}px`}></span>
          {:else}
            <span class="pt" style={`width:${q[1]}px`}><svg style={`width:${q[2]}px;height:${q[2]}px`} viewBox="0 0 24 24">{@html icons[q[0]]}</svg></span>
          {/if}
        {/each}
      </div>
      <div class="rfilter">
        <svg class="fi" viewBox="0 0 24 24">{@html icons.filter}</svg>
        <div class="rsearch"><svg viewBox="0 0 24 24">{@html icons.xg}</svg></div>
        <svg class="fd" viewBox="0 0 24 24">{@html icons.down}</svg>
        <svg class="fp" viewBox="0 0 24 24">{@html icons.plus}</svg>
      </div>
      <div class="tree rtree">
        {#each rightTree as r}
          <div class="row" style={`padding-left:${r.pl}px`}>
            {#if r.tri}<i class="tri r"></i>{/if}
            <svg viewBox="0 0 24 24">{@html icons[r.i]}</svg><span>{r.t}</span>
          </div>
        {/each}
        <div class="insert"></div>
        <div class="row" style="padding-left:9px">
          <i class="tri r"></i>
          <svg viewBox="0 0 24 24">{@html icons.patt}</svg>
          <svg class="star" viewBox="0 0 8 8">{@html icons.star}</svg>
          <span>阵列 2 / 拉伸 4</span>
        </div>
      </div>
    </aside>
  </main>

  <footer class="status">
    <div class="sleft">
      {#each statusL as s}
        <span class="sb" class:pressed={s[3]} style={`width:${s[1]}px`}><svg style={`width:${s[2]}px;height:${s[2]}px`} viewBox="0 0 24 24">{@html icons[s[0]]}</svg></span>
      {/each}
    </div>
    <div class="msgs">
      <div class="msg"><svg viewBox="0 0 18 20">{@html icons.arrowb}</svg><span>选择要分割的图元。</span></div>
      <div class="msg"><i class="dot"></i><span>当约束处于活动状态时，可通过单击右键在锁定/禁用/启用约束之间切换。使用 Tab 键可切换活动约束。按住 Shif</span></div>
    </div>
    <div class="stools">
      {#each tb1 as s}<span class="st" style={`width:${s[1]}px`}><svg viewBox="0 0 24 24">{@html icons[s[0]]}</svg></span>{/each}
      <div class="tgroup">{#each tb2 as s}<span class="tb"><svg viewBox="0 0 24 24">{@html icons[s[0]]}</svg></span>{/each}</div>
      {#each tb3 as s}<span class="st" style={`width:${s[1]}px`}><svg viewBox="0 0 24 24">{@html icons[s[0]]}</svg></span>{/each}
      <div class="tgroup">{#each tb4 as s}<span class="tb"><svg viewBox="0 0 24 24">{@html icons[s[0]]}</svg></span>{/each}</div>
      <div class="binos">
        <span class="bin"><svg viewBox="0 0 24 24">{@html icons.bino}</svg></span>
        <span class="binc"><i class="caret light"></i></span>
      </div>
      <div class="allbox">所有草绘</div>
    </div>
    <div class="mark">
      <div class="marktext"><span class="wild">野火</span><span class="forum">论坛</span></div>
      <svg class="flame" viewBox="0 0 30 66"><path d="M16 0c8 14 12 30 4 48-4 8-8 13-14 18 7-12 12-22 11-36C17 18 17 9 16 0z" fill="#f26a3a"/></svg>
      <div class="url">www.proewildfire.cn</div>
    </div>
  </footer>

  <div class="taskbar">
    <span class="ts white"></span><span class="ts blue"></span><span class="ts grey"></span>
  </div>
</div>

<style>
:global(body){margin:0;background:#1a1a1a}
.app{width:1915px;height:1036px;display:flex;flex-direction:column;overflow:hidden;font-family:"Open Sans","Noto Sans CJK SC",sans-serif;color:#555;background:#f8fafb}
svg{display:block;flex:none}
i{display:block;font-style:normal}

.title{height:31px;flex:none;background:#dde2e1;display:flex;align-items:center;position:relative}
.logo{width:22px;height:25px;margin-left:7px}
.brand{font-family:"Lato",sans-serif;font-size:23px;color:#55595c;margin-left:2px;width:60px;line-height:31px}
.brand sup{font-size:10px;vertical-align:8px;line-height:0}
.quick{display:flex;align-items:center;margin-left:5px}
.qi{display:flex;justify-content:center;align-items:center}
.qsep{width:1px;height:31px;background:#b8bebe;margin-left:2px}
.qi.more{width:29px}
.qi.more svg{width:18px;height:18px}
.wintitle{position:absolute;left:800px;top:0;line-height:33px;font-size:18px;color:#b6bcbc;white-space:nowrap}
.winbtns{margin-left:auto;display:flex;gap:11px;padding-right:8px}
.winbtns svg{width:22px;height:22px}

.tabs{height:36px;flex:none;background:#3d4548;display:flex;align-items:stretch;color:#f2f5f5;font-size:17px}
.tab{display:flex;align-items:center;justify-content:center;white-space:nowrap;padding-bottom:2px;box-sizing:border-box}
.tab.file{background:linear-gradient(#6fd04a,#4ea42e);color:#fff}
.tab.ctx{margin-left:7px;width:88px;background:#6f7d80;font-style:italic;color:#dfe6e6;border-right:1px solid #2b3133}
.tab.active{width:88px;background:#f8fafb;color:#555;font-style:italic}
.helpers{margin-left:auto;display:flex;align-items:flex-start;padding:6px 2px 0 0}
.hb{display:flex;justify-content:center}
.hb svg{width:20px;height:20px}

.ribbon{height:136px;flex:none;box-sizing:border-box;background:#f8fafb;border-bottom:2px solid #c6cccc;display:flex}
.group{flex:none;box-sizing:border-box;display:flex;flex-direction:column;border-right:1px solid #c4c8c8;margin:3px 0 2px}
.gbody{height:100.500px;margin-top:-3px;display:flex;flex:none}
.col{display:grid;grid-template-rows:repeat(3,33.500px);flex:none}
.item{display:flex;align-items:center;padding-left:4px;gap:5px;font-size:15px;color:#555;white-space:nowrap}
.item .ic{width:22px;height:22px;margin:0 -1px}
.item.only{padding-left:6px}
.item.dis{color:#bcc0c0}
.item.hl{background:#dbf2fc;box-shadow:inset 0 0 0 1.500px #88d4f2;width:95px;box-sizing:border-box;height:30px;align-self:center}
.caret{width:0;height:0;border-left:5px solid transparent;border-right:5px solid transparent;border-top:6px solid #666;margin-left:3px}
.caret.light{border-top-color:#bbb;margin:0}
.large{display:flex;flex-direction:column;align-items:center;font-size:15px;flex:none;white-space:nowrap}
.lgicon{height:53px;display:flex;align-items:center;justify-content:center;padding-top:2px;box-sizing:border-box}
.large span{line-height:26px}
.vsep{width:1px;height:100px;background:#c4c8c8;flex:none;margin-top:3px}
.select{width:50px;height:100px;margin-top:2px;box-sizing:border-box;border:1px solid #b0b4b4;background:#e2e3e3;display:flex;flex-direction:column;flex:none}
.seltop{height:48px;border-bottom:1px solid #b0b4b4;display:flex;justify-content:center;align-items:center}
.seltop svg{width:34px;height:44px}
.selbot{flex:1;display:flex;flex-direction:column;align-items:center;font-size:15px;color:#555;padding-top:3px;gap:7px}
.selbot .caret{margin:0}
.glabel{flex:1;display:flex;justify-content:center;align-items:center;font-size:15px;gap:3px;padding-top:3px}

.main{flex:1;display:flex;min-height:0}
.left{width:347px;flex:none;box-sizing:border-box;border-right:4px solid #e0e3e3;background:#f8fafb;display:flex;flex-direction:column}
.ptabs{height:31px;flex:none;display:flex;background:#dde2e1}
.ptab{width:39px;display:flex;justify-content:center;align-items:center}
.ptab.on{width:36px;background:#f8fafb}
.ptab svg{width:22px;height:22px}
.ptools{height:41px;flex:none;display:flex;align-items:center;padding-left:7px}
.pt{display:flex;justify-content:center;align-items:center;height:30px;flex:none}
.pt.pressed{background:#dcdfe0;box-shadow:inset 0 0 0 1px #bbb}
.gap{display:block;height:30px;flex:none}
.tsep{display:block;height:30px;flex:none;background:linear-gradient(#bcc2c2,#bcc2c2) center/1px 100% no-repeat}
.filter{height:32px;flex:none;display:flex;align-items:center;padding-left:10px}
.fi{width:22px;height:24px}
.search{width:225px;height:31px;margin-left:4px;background:#fff;border-top:1px solid #b8c0c0;box-sizing:border-box}
.fx{width:18px;height:18px;margin-left:4px}
.fd{width:14px;height:14px;margin-left:7px}
.fp{width:20px;height:20px;margin-left:8px}
.tree{padding-top:1px}
.row{height:24px;display:flex;align-items:center;gap:6px;font-size:15.500px;color:#555;white-space:nowrap}
.row svg{width:24px;height:24px;margin:0 -2px}
.tri{width:0;height:0;flex:none}
.tri.d{border-left:6px solid transparent;border-right:6px solid transparent;border-top:8px solid #8a8e8e;margin-right:4px}
.tri.r{border-top:6px solid transparent;border-bottom:6px solid transparent;border-left:8px solid #8a8e8e;margin:0 2px 0 2px}
.row svg.star{width:8px;height:8px;margin:-8px -6px 0 0}

.canvas{flex:1;background:#e9ebef;min-width:0}
.draw{width:1354px;height:767px}
.ax{font:15px "Liberation Mono",monospace}
.dl{font:17px "Liberation Mono",monospace;fill:#8a6468}
.dim{font:17px "Liberation Mono",monospace;fill:#19bfe6}
.note{font:20px "Liberation Serif","Noto Sans CJK SC",serif;fill:#f01414}

.right{width:214px;flex:none;box-sizing:border-box;background:#f8fafb;border-left:1px solid #dde2e2;display:flex;flex-direction:column}
.rtools{height:38px;flex:none;display:flex;align-items:center}
.rfilter{height:34px;flex:none;display:flex;align-items:center;padding-left:4px;margin-bottom:32px}
.rfilter .fi{width:22px;height:22px}
.rsearch{width:135px;height:33px;margin-left:3px;box-sizing:border-box;border:1px solid #b8c0c0;background:#fff;display:flex;align-items:center;justify-content:flex-end;padding-right:7px}
.rsearch svg{width:16px;height:16px}
.rtree{border-top:1px solid #d4d9d9;padding-top:1px}
.rfilter .fd{margin-left:5px}
.rfilter .fp{margin-left:5px}
.insert{height:18px;margin-left:3px;background:linear-gradient(#5cc93a,#5cc93a) 0 8px/100% 2px no-repeat}

.status{height:57px;flex:none;box-sizing:border-box;background:#f6fafb;border-top:2px solid #c3cccb;display:flex;position:relative}
.sleft{width:131px;flex:none;display:flex;align-items:flex-start;padding:20px 0 0 4px;box-sizing:border-box;border-right:1px solid #c4c8c8;height:44px}
.sb{height:30px;display:flex;justify-content:center;align-items:center;margin-top:-1px}
.sb.pressed{background:#dcdfe0;box-shadow:inset 0 0 0 1px #bbb}
.msgs{width:677px;flex:none;box-sizing:border-box;padding:7px 0 0 3px;border-right:1px solid #c4c8c8;font-size:13px;color:#444;height:54px;overflow:hidden}
.msg{display:flex;align-items:center;height:19px;white-space:nowrap;gap:2px}
.msg svg{width:15px;height:18px}
.dot{width:6px;height:8px;border-radius:50%;background:#2a7da0;margin:0 9px 0 5px}
.stools{display:flex;align-items:center;height:54px;padding:6px 0 0 4px;box-sizing:border-box;flex:1}
.st{display:flex;justify-content:center;flex:none}
.st svg{width:24px;height:24px}
.tgroup{display:flex;background:#dcdfe0;border:1px solid #bbb;height:30px;flex:none;box-sizing:border-box}
.tb{width:29.500px;display:flex;justify-content:center;align-items:center;border-right:1px solid #bbb;box-sizing:border-box}
.tb:last-child{border:0}
.tb svg{width:24px;height:24px}
.binos{display:flex;height:32px;margin-left:34px;box-sizing:border-box;border-left:1px solid #c4c8c8;border-right:1px solid #c4c8c8;padding:0 3px;flex:none}
.bin{width:33px;display:flex;align-items:center;justify-content:center}
.binc{width:19px;background:#dcdfe0;display:flex;align-items:center;justify-content:center}
.bin svg{width:24px;height:24px}
.allbox{width:197px;height:28px;margin-left:118px;box-sizing:border-box;border:1px solid #b8bcbc;font-size:14px;padding:4px 0 0 8px;background:#f6f8f8;flex:none;color:#444}
.mark{position:absolute;left:1732px;top:-2px;width:170px;height:57px;overflow:visible}
.marktext{display:flex;gap:9px;font-size:39px;line-height:42px;font-family:"Noto Sans CJK SC",sans-serif;font-weight:300;margin-top:0}
.wild{color:#f26a3a}
.forum{color:#111}
.flame{position:absolute;left:58px;top:-16px;width:24px;height:48px}
.url{position:absolute;left:0;top:40px;font:italic 14px "DejaVu Sans",sans-serif;color:#8f9698;letter-spacing:.2px;white-space:nowrap}

.taskbar{height:9px;flex:none;background:#1a1a1a;display:flex;align-items:flex-end}
.ts{display:block;flex:none}
.white{margin-left:302px;width:205px;height:6px;background:#ececec}
.blue{width:70px;height:6px;background:#2a86e8}
.grey{margin-left:440px;width:61px;height:9px;background:#444}
</style>
